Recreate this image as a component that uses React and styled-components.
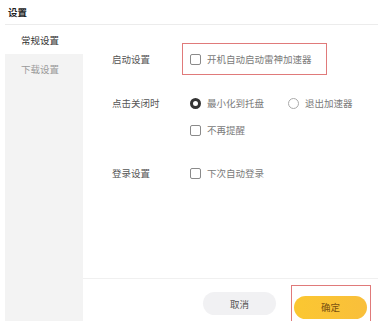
import styled, { createGlobalStyle } from 'styled-components';

const GlobalStyle = createGlobalStyle`
  html, body {
    margin: 0;
    padding: 0;
    background: #ffffff;
  }
  body {
    font-family: "Noto Sans CJK SC", "Noto Sans", sans-serif;
  }
  * {
    box-sizing: border-box;
  }
`;

const Page = styled.div`
  width: 378px;
  height: 321px;
  display: flex;
  flex-direction: column;
  overflow: hidden;
`;

const Header = styled.div`
  height: 25px;
  display: flex;
  align-items: center;
  margin-left: 5px;
  padding-left: 3px;
  font-size: 9.5px;
  font-weight: 700;
  color: #222222;
  border-bottom: 1px solid #ececec;
`;

const Body = styled.div`
  flex: 1;
  display: flex;
  min-height: 0;
`;

const Sidebar = styled.div`
  width: 78px;
  margin-left: 5px;
  background: #f3f3f3;
  display: flex;
  flex-direction: column;
`;

const SideItem = styled.div`
  height: 29px;
  display: flex;
  align-items: center;
  padding-left: 16px;
  font-size: 9.5px;
  color: ${(p) => (p.$active ? '#333333' : '#9a9a9a')};
  background: ${(p) => (p.$active ? '#ffffff' : 'transparent')};
`;

const Content = styled.div`
  flex: 1;
  display: flex;
  flex-direction: column;
  padding-top: 18px;
`;

const Row = styled.div`
  display: flex;
  align-items: ${(p) => (p.$center ? 'center' : 'flex-start')};
  margin-top: ${(p) => p.$gap || 0}px;
  padding-left: 29px;
`;

const Label = styled.div`
  width: 78px;
  font-size: 9.5px;
  line-height: 14px;
  color: #555555;
`;

const Controls = styled.div`
  display: flex;
  flex-direction: column;
  gap: 13px;
`;

const Line = styled.div`
  display: flex;
  align-items: center;
  height: 14px;
`;

const Option = styled.label`
  display: flex;
  align-items: center;
  gap: 6px;
  font-size: 9.5px;
  color: #7a7a7a;
  margin-right: ${(p) => p.$spacing || 0}px;
`;

const Check = styled.span`
  width: 11px;
  height: 11px;
  border: 1px solid #8a8a8a;
  border-radius: 2px;
`;

const Radio = styled.span`
  width: 11px;
  height: 11px;
  border-radius: 50%;
  border: ${(p) => (p.$on ? '3.5px solid #333333' : '1px solid #aaaaaa')};
  background: #ffffff;
`;

const Marked = styled.div`
  display: flex;
  align-items: center;
  height: 32px;
  padding: 0 14px 0 7px;
  margin-left: -8px;
  border: 1px solid #e07a7a;
`;

const Footer = styled.div`
  margin-top: auto;
  height: 43px;
  border-top: 1px solid #f0f0f0;
  display: flex;
  align-items: flex-start;
  justify-content: flex-end;
  padding-right: 7px;
  padding-top: 6px;
  gap: 15px;
`;

const Button = styled.button`
  width: 73px;
  height: 23px;
  border: none;
  border-radius: 12px;
  font-family: inherit;
  font-size: 9.5px;
  cursor: pointer;
  color: ${(p) => (p.$primary ? '#7a5210' : '#555555')};
  background: ${(p) =>
    p.$primary ? 'linear-gradient(90deg, #fbc731, #f9bf3b)' : '#f1f1f3'};
  margin-top: ${(p) => (p.$primary ? 0 : 7)}px;
`;

const MarkedButton = styled.div`
  padding: 6px 3px 4px 2px;
  border: 1px solid #e07a7a;
`;

const App = () => {
  return (
    <>
      <GlobalStyle />
      <Page>
        <Header>设置</Header>
        <Body>
          <Sidebar>
            <SideItem $active>常规设置</SideItem>
            <SideItem>下载设置</SideItem>
          </Sidebar>
          <Content>
            <Row $center>
              <Label>启动设置</Label>
              <Marked>
                <Option>
                  <Check />
                  开机自动启动雷神加速器
                </Option>
              </Marked>
            </Row>
            <Row $gap={21}>
              <Label>点击关闭时</Label>
              <Controls>
                <Line>
                  <Option $spacing={24}>
                    <Radio $on />
                    最小化到托盘
                  </Option>
                  <Option>
                    <Radio />
                    退出加速器
                  </Option>
                </Line>
                <Line>
                  <Option>
                    <Check />
                    不再提醒
                  </Option>
                </Line>
              </Controls>
            </Row>
            <Row $gap={29}>
              <Label>登录设置</Label>
              <Line>
                <Option>
                  <Check />
                  下次自动登录
                </Option>
              </Line>
            </Row>
            <Footer>
              <Button>取消</Button>
              <MarkedButton>
                <Button $primary>确定</Button>
              </MarkedButton>
            </Footer>
          </Content>
        </Body>
      </Page>
    </>
  );
};

export default App;
